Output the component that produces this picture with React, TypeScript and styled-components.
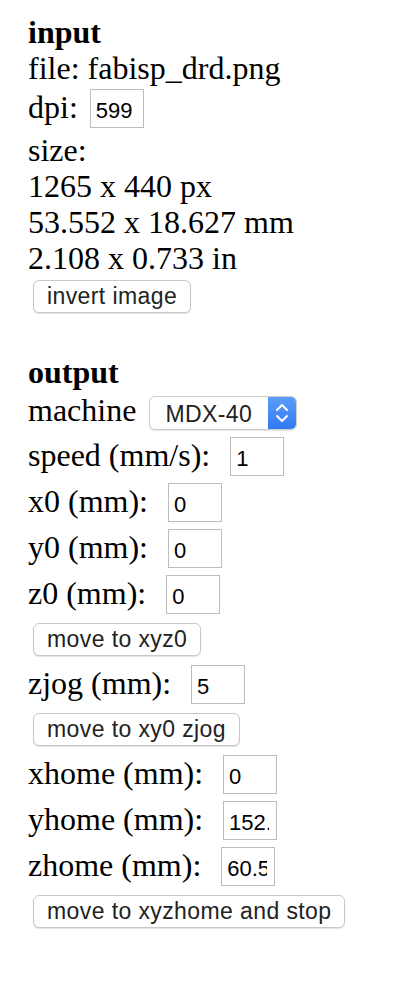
import styled, { createGlobalStyle } from "styled-components";

const GlobalStyle = createGlobalStyle`
  body {
    margin: 0;
    background: #ffffff;
    color: #000000;
    font-family: "Liberation Serif", "Times New Roman", serif;
  }
`;

const Page = styled.main`
  padding: 14px 0 40px 28px;
  font-size: 32px;
`;

const Section = styled.section<{ $gap?: number }>`
  margin-top: ${(p) => p.$gap ?? 0}px;
`;

const Heading = styled.h2`
  margin: 0;
  font-size: 32px;
  font-weight: bold;
  line-height: 36px;
`;

const Line = styled.div`
  line-height: 36px;
  white-space: pre;
`;

const Row = styled.div<{ $height?: number }>`
  display: flex;
  align-items: flex-start;
  height: ${(p) => p.$height ?? 46}px;
`;

const Label = styled.span<{ $top?: number }>`
  line-height: 36px;
  margin-top: ${(p) => p.$top ?? 3}px;
  white-space: pre;
`;

const Field = styled.input<{ $gap?: number }>`
  box-sizing: border-box;
  width: 54px;
  height: 39px;
  margin: 3px 0 0 ${(p) => p.$gap ?? 20}px;
  padding: 4px 7px 0 5px;
  border: 1px solid #bdbdbd;
  border-radius: 0;
  background: #ffffff;
  color: #000000;
  font-family: "Liberation Sans", Arial, sans-serif;
  font-size: 22px;
  outline: none;
`;

const ButtonRow = styled.div<{ $top?: number }>`
  display: flex;
  padding: ${(p) => p.$top ?? 5}px 0 6px 5px;
`;

const Button = styled.button`
  box-sizing: border-box;
  height: 33px;
  padding: 0 13px;
  border: 1px solid #c8c8c8;
  border-radius: 6px;
  background: #ffffff;
  box-shadow: 0 1px 1px rgba(0, 0, 0, 0.12);
  color: #222222;
  font-family: "Liberation Sans", Arial, sans-serif;
  font-size: 23px;
  letter-spacing: 0.4px;
  line-height: 1;
  cursor: pointer;
`;

const Select = styled.div<{ $gap?: number }>`
  box-sizing: border-box;
  display: flex;
  width: 148px;
  height: 34px;
  margin: 6px 0 0 ${(p) => p.$gap ?? 13}px;
  border: 1px solid #cdcdcd;
  border-radius: 6px;
  overflow: hidden;
  background: #ffffff;
  box-shadow: 0 1px 1px rgba(0, 0, 0, 0.1);
`;

const SelectValue = styled.span`
  flex: 1;
  padding: 4px 0 0 15px;
  color: #222222;
  font-family: "Liberation Sans", Arial, sans-serif;
  font-size: 23px;
  letter-spacing: 0.4px;
  line-height: 27px;
`;

const SelectArrow = styled.span`
  display: flex;
  align-items: center;
  justify-content: center;
  width: 28px;
  background: linear-gradient(#5c9cf8, #3079f5);
`;

const Chevrons = () => (
  <svg width="14" height="20" viewBox="0 0 14 20" fill="none">
    <path
      d="M2 7 L7 2 L12 7 M2 13 L7 18 L12 13"
      stroke="#ffffff"
      strokeWidth="2"
      strokeLinecap="round"
      strokeLinejoin="round"
    />
  </svg>
);

type FieldRowProps = { label: string; value: string; gap?: number };

const FieldRow = ({ label, value, gap }: FieldRowProps) => (
  <Row>
    <Label>{label}</Label>
    <Field $gap={gap} defaultValue={value} readOnly />
  </Row>
);

export default function App() {
  return (
    <>
      <GlobalStyle />
      <Page>
        <Section>
          <Heading>input</Heading>
          <Line>file: fabisp_drd.png</Line>
          <FieldRow label="dpi:" value="599" gap={12} />
          <Line>size:</Line>
          <Line>1265 x 440 px</Line>
          <Line>53.552 x 18.627 mm</Line>
          <Line>2.108 x 0.733 in</Line>
          <ButtonRow $top={4}>
            <Button>invert image</Button>
          </ButtonRow>
        </Section>

        <Section $gap={35}>
          <Heading>output</Heading>
          <Row $height={44}>
            <Label $top={2}>machine</Label>
            <Select>
              <SelectValue>MDX-40</SelectValue>
              <SelectArrow>
                <Chevrons />
              </SelectArrow>
            </Select>
          </Row>
          <FieldRow label="speed (mm/s):" value="1" />
          <FieldRow label="x0 (mm):" value="0" />
          <FieldRow label="y0 (mm):" value="0" />
          <FieldRow label="z0 (mm):" value="0" />
          <ButtonRow>
            <Button>move to xyz0</Button>
          </ButtonRow>
          <FieldRow label="zjog (mm):" value="5" />
          <ButtonRow>
            <Button>move to xy0 zjog</Button>
          </ButtonRow>
          <FieldRow label="xhome (mm):" value="0" />
          <FieldRow label="yhome (mm):" value="152.4" />
          <FieldRow label="zhome (mm):" value="60.5" />
          <ButtonRow>
            <Button>move to xyzhome and stop</Button>
          </ButtonRow>
        </Section>
      </Page>
    </>
  );
}
